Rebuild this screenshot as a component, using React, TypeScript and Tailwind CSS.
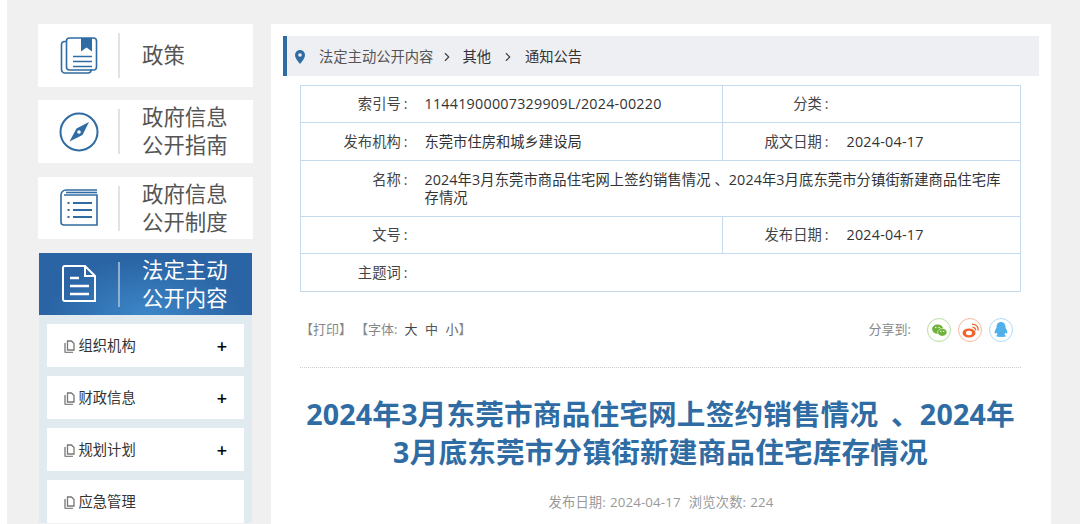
import React from 'react'
import { ChevronRight } from 'lucide-react'

const font = "font-['Open_Sans','Noto_Sans_CJK_SC',sans-serif]"

function BookIcon() {
  return (
    <svg width="38" height="38" viewBox="0 0 38 38" fill="none" stroke="#2f6ca3" strokeWidth="1.6">
      <path d="M6 4.500h-1.500a3 3 0 0 0-3 3v25a3.500 3.500 0 0 0 3.500 3.500h23a3 3 0 0 0 3-3v-1" />
      <rect x="6.500" y="1" width="30" height="32" rx="3" />
      <path d="M21 1h11v13.500l-5.500-4-5.500 4z" fill="#2f6ca3" stroke="none" />
      <path d="M13 19.500h19M13 24.500h19M13 29.500h19" />
    </svg>
  )
}

function CompassIcon() {
  return (
    <svg width="40" height="40" viewBox="0 0 40 40" fill="none">
      <circle cx="20" cy="20" r="18.500" stroke="#2f6ca3" strokeWidth="2" />
      <path d="M30 10 L17.500 16.500 L10.500 29.500 L23.500 23z" fill="#2f6ca3" />
      <circle cx="20" cy="20" r="1.800" fill="#fff" />
    </svg>
  )
}

function ListIcon() {
  return (
    <svg width="38" height="38" viewBox="0 0 38 38" fill="none" stroke="#2f6ca3" strokeWidth="1.600">
      <path d="M37 1H6a5 5 0 0 0-5 5v27a3 3 0 0 0 3 3h33V6H4" />
      <path d="M6 3.500h31" />
      <path d="M13 14h19M13 21h19M13 28h19" strokeWidth="2" />
      <path d="M7.500 14h2M7.500 21h2M7.500 28h2" strokeWidth="2" />
    </svg>
  )
}

function DocIcon() {
  return (
    <svg width="34" height="38" viewBox="0 0 34 38" fill="none" stroke="#fff" strokeWidth="2">
      <path d="M3 1h20l10 10v25H3a2 2 0 0 1-2-2V3a2 2 0 0 1 2-2z" />
      <path d="M23 1v10h10" />
      <path d="M8 13h9M8 21h19M8 29h19" strokeWidth="2.500" />
    </svg>
  )
}

function NavItem({ icon, className, children }: { icon: React.ReactNode; className: string; children: React.ReactNode }) {
  return (
    <div className={`flex items-center bg-white ${className}`}>
      <span className="flex w-[80px] justify-center pl-[2px]">{icon}</span>
      <span className="h-[45px] w-[2px] bg-[#e2e2e2]" />
      <span className="mb-[1px] ml-[22px] text-[21.4px] leading-[28px] text-[#555]">{children}</span>
    </div>
  )
}

function PagesIcon() {
  return (
    <svg width="11" height="13" viewBox="0 0 11 13" fill="none" className="mr-[4px]">
      <path d="M1 3v8.500a1 1 0 0 0 1 1h7" stroke="#888" strokeWidth="1.500" />
      <path d="M3.500 1h4L10 3.500V10H3.500z" stroke="#777" strokeWidth="1.300" />
    </svg>
  )
}

function SubItem({ label, plus = true }: { label: string; plus?: boolean }) {
  return (
    <div className="flex h-[43px] items-center justify-between bg-white pl-[17px] pr-[17px]">
      <span className="flex items-center pt-[1px] text-[14.3px] text-[#333]">
        <PagesIcon />
        {label}
      </span>
      {plus && <span className="text-[18px] font-semibold leading-none text-black">+</span>}
    </div>
  )
}

function Sidebar() {
  return (
    <aside className="flex w-[215px] flex-col">
      <NavItem icon={<BookIcon />} className="h-[63px]">
        政策
      </NavItem>
      <NavItem icon={<CompassIcon />} className="mt-[13px] h-[63px]">
        政府信息
        <br />
        公开指南
      </NavItem>
      <NavItem icon={<ListIcon />} className="mt-[14px] h-[62px]">
        政府信息
        <br />
        公开制度
      </NavItem>
      <div className="ml-[1px] mr-[1px] mt-[14px] bg-[#e1eaef] pl-[7.5px] pr-[8px]">
        <div className="-ml-[7.5px] -mr-[8px] flex h-[62px] items-center bg-[radial-gradient(ellipse_at_50%_100%,#3c87c8,#2a64a4_65%)]">
          <span className="flex w-[79px] justify-center pl-[1px]">
            <DocIcon />
          </span>
          <span className="h-[45px] w-[2px] bg-[#8fb0d0]" />
          <span className="ml-[22px] text-[21.4px] leading-[28px] text-white">
            法定主动
            <br />
            公开内容
          </span>
        </div>
        <div className="flex flex-col gap-[9px] pt-[9px]">
          <SubItem label="组织机构" />
          <SubItem label="财政信息" />
          <SubItem label="规划计划" />
          <SubItem label="应急管理" plus={false} />
        </div>
      </div>
    </aside>
  )
}

function Breadcrumb() {
  return (
    <div className="flex h-[40px] items-center border-l-[4px] border-[#2f6ca3] bg-[#eeeff3] pl-[8px] pt-[1px] text-[14.3px] text-[#333]">
      <svg width="10" height="14" viewBox="0 0 10 14">
        <path d="M5 0a5 5 0 0 1 5 5c0 3.500-5 9-5 9S0 8.500 0 5a5 5 0 0 1 5-5z" fill="#2f6ca3" />
        <circle cx="5" cy="5" r="1.800" fill="#eeeff3" />
      </svg>
      <span className="ml-[14px] text-[#555]">法定主动公开内容</span>
      <ChevronRight size={14} className="ml-[7px] text-[#444]" />
      <span className="ml-[8px]">其他</span>
      <ChevronRight size={14} className="ml-[10px] text-[#444]" />
      <span className="ml-[10px]">通知公告</span>
    </div>
  )
}

function Label({ text, top = false }: { text: string; top?: boolean }) {
  return (
    <td className={`border border-r-0 border-[#c5daec] pr-[1px] text-right text-[#444] ${top ? 'pt-[10px] align-top' : 'align-middle'}`}>
      {text}
      <span className="ml-[3px]">:</span>
    </td>
  )
}

function InfoTable() {
  const cell = 'border border-l-0 border-[#c5daec] pr-[15px] align-middle'
  return (
    <table className="ml-[17px] w-[721px] table-fixed border-collapse text-[14.3px] leading-[18px] text-[#333]">
      <colgroup>
        <col className="w-[108px]" />
        <col className="w-[314px]" />
        <col className="w-[107px]" />
        <col />
      </colgroup>
      <tbody>
        <tr className="h-[37px]">
          <Label text="索引号" />
          <td className={`${cell} pl-[16px] tracking-[0.25px]`}>11441900007329909L/2024-00220</td>
          <Label text="分类" />
          <td className={`${cell} pl-[17px]`}></td>
        </tr>
        <tr className="h-[38px]">
          <Label text="发布机构" />
          <td className={`${cell} pl-[16px]`}>东莞市住房和城乡建设局</td>
          <Label text="成文日期" />
          <td className={`${cell} pl-[17px] tracking-[0.25px]`}>2024-04-17</td>
        </tr>
        <tr className="h-[56px]">
          <Label text="名称" top />
          <td colSpan={3} className={`${cell} pl-[16px] tracking-[0.1px]`}>
            2024年3月东莞市商品住宅网上签约销售情况 、2024年3月底东莞市分镇街新建商品住宅库存情况
          </td>
        </tr>
        <tr className="h-[37px]">
          <Label text="文号" />
          <td className={`${cell} pl-[16px]`}></td>
          <Label text="发布日期" />
          <td className={`${cell} pl-[17px] tracking-[0.25px]`}>2024-04-17</td>
        </tr>
        <tr className="h-[38px]">
          <Label text="主题词" />
          <td colSpan={3} className={`${cell} pl-[16px]`}></td>
        </tr>
      </tbody>
    </table>
  )
}

function ShareRow() {
  return (
    <div className="ml-[17px] mr-[26px] mt-[26px] flex h-[24px] items-center justify-between text-[13px] text-[#888]">
      <span className="flex items-center">
        <span>【打印】</span>
        <span className="ml-[3px]">【字体:</span>
        <span className="ml-[7px] text-[#444]">大</span>
        <span className="ml-[7.500px] text-[#555]">中</span>
        <span className="ml-[7.500px] text-[#666]">小</span>
        <span>】</span>
      </span>
      <span className="flex items-center">
        <span className="mr-[16px]">分享到:</span>
        <span className="flex size-[24px] items-center justify-center rounded-full border border-[#b8de9c]">
          <svg width="15" height="13" viewBox="0 0 16 14" fill="#6fb43a">
            <ellipse cx="6" cy="5.500" rx="6" ry="5" />
            <ellipse cx="11" cy="9" rx="5" ry="4.200" stroke="#fff" strokeWidth="0.6" />
            <circle cx="4" cy="3.800" r="0.800" fill="#fff" />
            <circle cx="7.500" cy="3.800" r="0.800" fill="#fff" />
            <circle cx="9.500" cy="8" r="0.700" fill="#fff" />
            <circle cx="12.500" cy="8" r="0.700" fill="#fff" />
          </svg>
        </span>
        <span className="ml-[7px] flex size-[24px] items-center justify-center rounded-full border border-[#f9b89e]">
          <svg width="17" height="15" viewBox="0 0 17 15" fill="none">
            <ellipse cx="7" cy="10" rx="6.500" ry="4.500" fill="#f0652c" />
            <ellipse cx="7" cy="10" rx="3" ry="2.200" fill="#fff" />
            <path d="M10 1.500a5 5 0 0 1 6 6M10.500 4.500a2.500 2.500 0 0 1 3 3" stroke="#f0652c" strokeWidth="1.300" />
          </svg>
        </span>
        <span className="ml-[7px] flex size-[24px] items-center justify-center rounded-full border border-[#aedbf7]">
          <svg width="14" height="16" viewBox="0 0 14 16" fill="#4fb0ea">
            <path d="M7 0c3 0 4.500 2.300 4.500 5 0 1 .4 1.500 1 2.500.9 1.500 1.200 3.500.6 4-.4.300-1-.3-1.500-1-.2 1-.7 1.800-1.300 2.300 1 .4 1.500.8 1.500 1.300 0 .6-2 .9-3 .9-.8 0-1.300-.3-1.800-.3s-1 .3-1.800.3c-1 0-3-.3-3-.9 0-.5.500-.9 1.500-1.300-.6-.5-1.100-1.300-1.300-2.300-.5.700-1.100 1.300-1.500 1-.6-.5-.3-2.500.6-4 .6-1 1-1.500 1-2.500C2.500 2.300 4 0 7 0z" />
          </svg>
        </span>
      </span>
    </div>
  )
}

function Main() {
  return (
    <main className="ml-[18px] h-[500px] w-[780px] overflow-hidden bg-white px-[12px] pt-[12px]">
      <Breadcrumb />
      <div className="mt-[9px]">
        <InfoTable />
      </div>
      <ShareRow />
      <div className="ml-[17px] mr-[18px] mt-[25px] border-t border-dotted border-[#ccc]" />
      <h1 className="ml-[17px] mr-[18px] mt-[27px] text-center text-[28.6px] font-bold leading-[38px] tracking-[0.2px] text-[#2f6ca3] [word-spacing:5px]">
        2024年3月东莞市商品住宅网上签约销售情况 、2024年3月底东莞市分镇街新建商品住宅库存情况
      </h1>
      <p className="mt-[22px] text-center text-[13.3px] tracking-[0.15px] text-[#999]">
        发布日期:<span className="ml-[4px]">2024-04-17</span>
        <span className="ml-[8px]">浏览次数:</span>
        <span className="ml-[4px]">224</span>
      </p>
    </main>
  )
}

export default function App() {
  return (
    <div className={`${font} h-[524px] w-[1080px] overflow-hidden bg-white pl-[7px]`}>
      <div className="flex h-full bg-[#f0f0f0] pl-[31px] pt-[24px]">
        <Sidebar />
        <Main />
      </div>
    </div>
  )
}
